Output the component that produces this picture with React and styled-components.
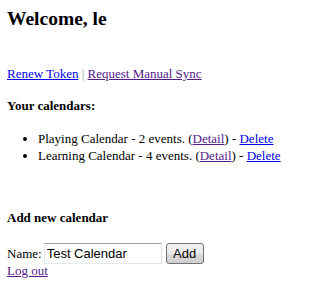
import React from "react";
import styled, { createGlobalStyle } from "styled-components";

const Global = createGlobalStyle`
  body {
    margin: 8px 7px;
    font: 13px/16px "Liberation Serif", "Times New Roman", serif;
    color: #000;
    background: #fff;
  }
`;

const Title = styled.h2`
  font: bold 19.5px/22px "Liberation Serif", serif;
  margin: 0 0 36px;
`;

const Link = styled.a`
  color: ${(p) => (p.visited ? "#551a8b" : "#0000ee")};
  text-decoration: underline;
  cursor: pointer;
`;

const Sep = styled.span`
  color: #999;
`;

const Bar = styled.div`
  margin: 0 0 16px;
`;

const Heading = styled.h4`
  font: bold 13px/16px "Liberation Serif", serif;
  margin: 0;
`;

const List = styled.ul`
  margin: 16px 0 46px;
  padding-left: 31px;
  list-style: disc;
`;

const Item = styled.li`
  line-height: 17px;
`;

const Form = styled.form`
  display: flex;
  align-items: center;
  gap: 2px;
  margin: 17px 0 -1px;
`;

const Input = styled.input`
  width: 112px;
  height: 17px;
  padding: 1px 2px;
  border: 1px solid #abadb3;
  border-top-color: #a0a3a8;
  border-left-color: #e2e3ea;
  border-bottom-color: #e3e9ef;
  border-right-color: #dbdfe6;
  font: 13px "Liberation Sans", Arial, sans-serif;
  color: #000;
  outline: none;
`;

const Button = styled.button`
  width: 38px;
  height: 21px;
  margin-left: 2px;
  padding: 0;
  border: 1px solid #707070;
  border-radius: 3px;
  background: linear-gradient(#f2f2f2 0%, #ebebeb 50%, #dddddd 51%, #cfcfcf 100%);
  font: 13px "Liberation Sans", Arial, sans-serif;
  color: #000;
`;

const calendars = [
  { name: "Playing Calendar", events: 2 },
  { name: "Learning Calendar", events: 4 },
];

export default function App() {
  return (
    <>
      <Global />
      <Title>Welcome, le</Title>
      <Bar>
        <Link>Renew Token</Link> <Sep>|</Sep> <Link visited>Request Manual Sync</Link>
      </Bar>
      <Heading>Your calendars:</Heading>
      <List>
        {calendars.map((c) => (
          <Item key={c.name}>
            {c.name} - {c.events} events. (<Link visited>Detail</Link>) - <Link>Delete</Link>
          </Item>
        ))}
      </List>
      <Heading>Add new calendar</Heading>
      <Form onSubmit={(e) => e.preventDefault()}>
        Name: <Input defaultValue="Test Calendar" />
        <Button type="button">Add</Button>
      </Form>
      <Link visited>Log out</Link>
    </>
  );
}
